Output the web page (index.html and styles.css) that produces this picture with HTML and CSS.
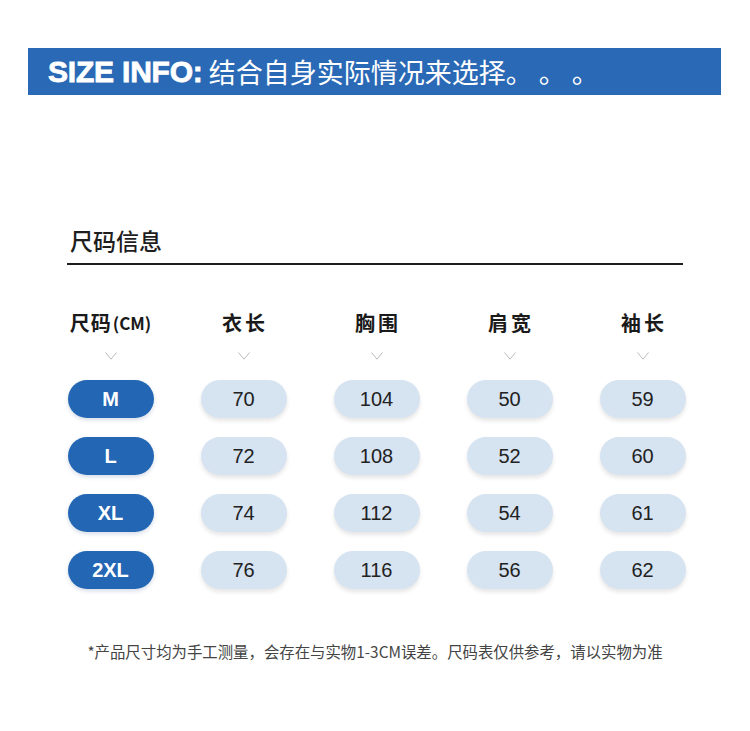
FILE: index.html
```html
<!DOCTYPE html>
<html lang="zh">
<head>
<meta charset="utf-8">
<title>尺码信息</title>
<link rel="stylesheet" href="styles.css">
</head>
<body>
<div class="banner">
  <span class="banner-en">SIZE INFO:</span><span class="banner-cn">结合自身实际情况来选择。 。 。</span>
</div>

<div class="section">
  <div class="section-title">尺码信息</div>
</div>

<div class="table">
  <div class="row-head">
    <div class="head"><span class="head-main">尺码</span><span class="head-unit">(CM)</span></div>
    <div class="head spaced">衣长</div>
    <div class="head spaced">胸围</div>
    <div class="head spaced">肩宽</div>
    <div class="head spaced">袖长</div>
  </div>

  <div class="row-chev">
    <div class="chev"><svg width="12" height="8" viewBox="0 0 12 8"><polyline points="0.5,0.5 6,7.2 11.5,0.5" fill="none" stroke="#bcbcbc" stroke-width="1"/></svg></div>
    <div class="chev"><svg width="12" height="8" viewBox="0 0 12 8"><polyline points="0.5,0.5 6,7.2 11.5,0.5" fill="none" stroke="#bcbcbc" stroke-width="1"/></svg></div>
    <div class="chev"><svg width="12" height="8" viewBox="0 0 12 8"><polyline points="0.5,0.5 6,7.2 11.5,0.5" fill="none" stroke="#bcbcbc" stroke-width="1"/></svg></div>
    <div class="chev"><svg width="12" height="8" viewBox="0 0 12 8"><polyline points="0.5,0.5 6,7.2 11.5,0.5" fill="none" stroke="#bcbcbc" stroke-width="1"/></svg></div>
    <div class="chev"><svg width="12" height="8" viewBox="0 0 12 8"><polyline points="0.5,0.5 6,7.2 11.5,0.5" fill="none" stroke="#bcbcbc" stroke-width="1"/></svg></div>
  </div>

  <div class="rows">
    <div class="cell"><span class="pill size">M</span></div>
    <div class="cell"><span class="pill val">70</span></div>
    <div class="cell"><span class="pill val">104</span></div>
    <div class="cell"><span class="pill val">50</span></div>
    <div class="cell"><span class="pill val">59</span></div>

    <div class="cell"><span class="pill size">L</span></div>
    <div class="cell"><span class="pill val">72</span></div>
    <div class="cell"><span class="pill val">108</span></div>
    <div class="cell"><span class="pill val">52</span></div>
    <div class="cell"><span class="pill val">60</span></div>

    <div class="cell"><span class="pill size">XL</span></div>
    <div class="cell"><span class="pill val">74</span></div>
    <div class="cell"><span class="pill val">112</span></div>
    <div class="cell"><span class="pill val">54</span></div>
    <div class="cell"><span class="pill val">61</span></div>

    <div class="cell"><span class="pill size">2XL</span></div>
    <div class="cell"><span class="pill val">76</span></div>
    <div class="cell"><span class="pill val">116</span></div>
    <div class="cell"><span class="pill val">56</span></div>
    <div class="cell"><span class="pill val">62</span></div>
  </div>
</div>

<p class="note">*产品尺寸均为手工测量，会存在与实物1-3CM误差。尺码表仅供参考，请以实物为准</p>
</body>
</html>
```

FILE: styles.css
```css
html, body {
  margin: 0;
  padding: 0;
  background: #ffffff;
}

body {
  width: 750px;
  height: 731px;
  overflow: hidden;
  font-family: "Noto Sans CJK SC", "Noto Sans", sans-serif;
  color: #222;
}

.banner {
  margin: 48px 0 0 28px;
  width: 693px;
  height: 47px;
  box-sizing: border-box;
  padding-left: 20px;
  background: #2a69b5;
  display: flex;
  align-items: center;
  color: #fff;
  white-space: nowrap;
}

.banner-en {
  font-family: "Liberation Sans", Arial, sans-serif;
  font-weight: 700;
  font-size: 30px;
  letter-spacing: -0.2px;
  -webkit-text-stroke: 0.8px #fff;
  margin-right: 6px;
}

.banner-cn {
  font-family: "Noto Sans CJK SC", sans-serif;
  font-size: 27px;
  font-weight: 400;
}

.section {
  margin: 130px 0 0 67px;
  width: 616px;
  border-bottom: 2px solid #1e1e1e;
  padding-bottom: 8px;
}

.section-title {
  padding-left: 3px;
  font-size: 23px;
  line-height: 30px;
  font-weight: 500;
  color: #1e1e1e;
}

.table {
  margin-left: 44px;
  display: flex;
  flex-direction: column;
}

.row-head,
.row-chev,
.rows {
  display: grid;
  grid-template-columns: repeat(5, 133px);
}

.row-head {
  margin-top: 46px;
  height: 24px;
}

.head {
  display: flex;
  justify-content: center;
  align-items: center;
  font-size: 20px;
  line-height: 24px;
  font-weight: 700;
  color: #1a1a1a;
  white-space: nowrap;
}

.head.spaced {
  letter-spacing: 3px;
  text-indent: 3px;
}

.head-main {
  letter-spacing: 1px;
}

.head-unit {
  font-size: 17px;
  margin-left: 1px;
}

.row-chev {
  margin-top: 14px;
  height: 14px;
}

.chev {
  display: flex;
  justify-content: center;
  align-items: center;
}

.chev svg {
  display: block;
}

.rows {
  margin-top: 17px;
  grid-auto-rows: 38px;
  row-gap: 19px;
}

.cell {
  display: flex;
  justify-content: center;
}

.pill {
  width: 86px;
  height: 38px;
  border-radius: 19px;
  display: flex;
  justify-content: center;
  align-items: center;
  font-family: "Liberation Sans", Arial, sans-serif;
  font-size: 20px;
}

.pill.size {
  background: #2366b3;
  color: #fff;
  font-weight: 700;
  box-shadow: 0 2px 4px rgba(20, 60, 120, 0.18);
}

.pill.val {
  background: #d6e3f1;
  color: #222;
  box-shadow: 0 3px 4px rgba(0, 0, 0, 0.10);
}

.note {
  margin: 52px 0 0;
  text-align: center;
  font-size: 15.4px;
  line-height: 20px;
  color: #444;
}
```
